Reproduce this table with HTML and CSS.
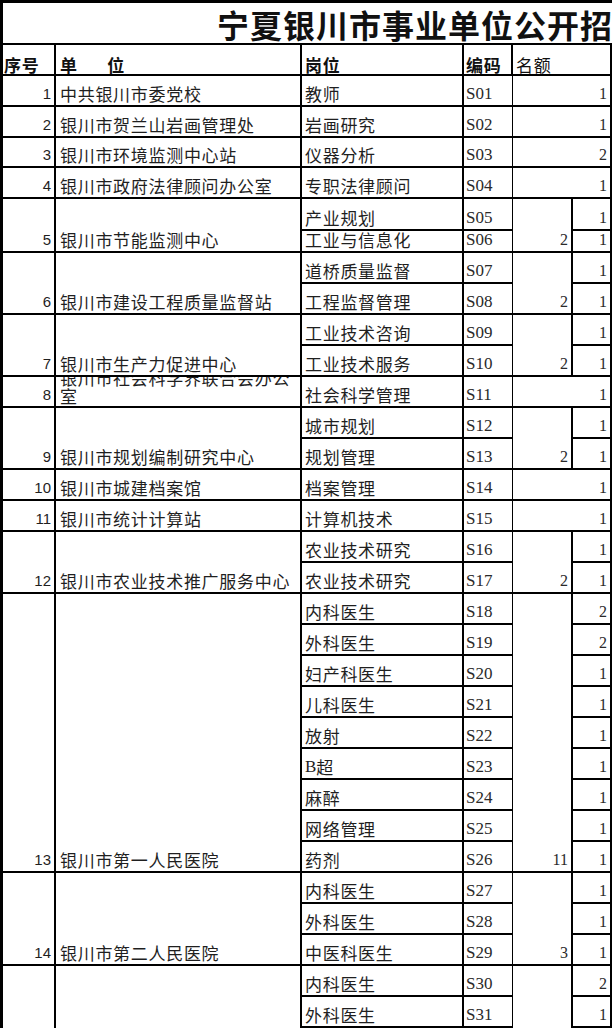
FILE: index.html
```html
<!DOCTYPE html>
<html lang="zh-CN">
<head>
<meta charset="utf-8">
<title>宁夏银川市事业单位公开招聘</title>
<link rel="stylesheet" href="styles.css">
</head>
<body>
<div class="sheet">
  <div class="cell title">宁夏银川市事业单位公开招</div>

  <div class="cell head">序号</div>
  <div class="cell head unit"><span class="spaced">单 位</span></div>
  <div class="cell head post">岗位</div>
  <div class="cell head code-h">编码</div>
  <div class="cell head quota-h span2c">名额</div>

  <div class="cell seq">1</div>
  <div class="cell unit">中共银川市委党校</div>
  <div class="cell post">教师</div>
  <div class="cell code">S01</div>
  <div class="cell cnt span2c">1</div>

  <div class="cell seq">2</div>
  <div class="cell unit">银川市贺兰山岩画管理处</div>
  <div class="cell post">岩画研究</div>
  <div class="cell code">S02</div>
  <div class="cell cnt span2c">1</div>

  <div class="cell seq">3</div>
  <div class="cell unit">银川市环境监测中心站</div>
  <div class="cell post">仪器分析</div>
  <div class="cell code">S03</div>
  <div class="cell cnt span2c">2</div>

  <div class="cell seq">4</div>
  <div class="cell unit">银川市政府法律顾问办公室</div>
  <div class="cell post">专职法律顾问</div>
  <div class="cell code">S04</div>
  <div class="cell cnt span2c">1</div>

  <div class="cell seq span2r">5</div>
  <div class="cell unit span2r">银川市节能监测中心</div>
  <div class="cell post">产业规划</div>
  <div class="cell code">S05</div>
  <div class="cell total span2r">2</div>
  <div class="cell cnt">1</div>
  <div class="cell post">工业与信息化</div>
  <div class="cell code">S06</div>
  <div class="cell cnt">1</div>

  <div class="cell seq span2r">6</div>
  <div class="cell unit span2r">银川市建设工程质量监督站</div>
  <div class="cell post">道桥质量监督</div>
  <div class="cell code">S07</div>
  <div class="cell total span2r">2</div>
  <div class="cell cnt">1</div>
  <div class="cell post">工程监督管理</div>
  <div class="cell code">S08</div>
  <div class="cell cnt">1</div>

  <div class="cell seq span2r">7</div>
  <div class="cell unit span2r">银川市生产力促进中心</div>
  <div class="cell post">工业技术咨询</div>
  <div class="cell code">S09</div>
  <div class="cell total span2r">2</div>
  <div class="cell cnt">1</div>
  <div class="cell post">工业技术服务</div>
  <div class="cell code">S10</div>
  <div class="cell cnt">1</div>

  <div class="cell seq">8</div>
  <div class="cell unit wrap"><span>银川市社会科学界联合会办公室</span></div>
  <div class="cell post">社会科学管理</div>
  <div class="cell code">S11</div>
  <div class="cell cnt span2c">1</div>

  <div class="cell seq span2r">9</div>
  <div class="cell unit span2r">银川市规划编制研究中心</div>
  <div class="cell post">城市规划</div>
  <div class="cell code">S12</div>
  <div class="cell total span2r">2</div>
  <div class="cell cnt">1</div>
  <div class="cell post">规划管理</div>
  <div class="cell code">S13</div>
  <div class="cell cnt">1</div>

  <div class="cell seq">10</div>
  <div class="cell unit">银川市城建档案馆</div>
  <div class="cell post">档案管理</div>
  <div class="cell code">S14</div>
  <div class="cell cnt span2c">1</div>

  <div class="cell seq">11</div>
  <div class="cell unit">银川市统计计算站</div>
  <div class="cell post">计算机技术</div>
  <div class="cell code">S15</div>
  <div class="cell cnt span2c">1</div>

  <div class="cell seq span2r">12</div>
  <div class="cell unit span2r">银川市农业技术推广服务中心</div>
  <div class="cell post">农业技术研究</div>
  <div class="cell code">S16</div>
  <div class="cell total span2r">2</div>
  <div class="cell cnt">1</div>
  <div class="cell post">农业技术研究</div>
  <div class="cell code">S17</div>
  <div class="cell cnt">1</div>

  <div class="cell seq span9r">13</div>
  <div class="cell unit span9r">银川市第一人民医院</div>
  <div class="cell post">内科医生</div>
  <div class="cell code">S18</div>
  <div class="cell total span9r">11</div>
  <div class="cell cnt">2</div>
  <div class="cell post">外科医生</div>
  <div class="cell code">S19</div>
  <div class="cell cnt">2</div>
  <div class="cell post">妇产科医生</div>
  <div class="cell code">S20</div>
  <div class="cell cnt">1</div>
  <div class="cell post">儿科医生</div>
  <div class="cell code">S21</div>
  <div class="cell cnt">1</div>
  <div class="cell post">放射</div>
  <div class="cell code">S22</div>
  <div class="cell cnt">1</div>
  <div class="cell post"><span class="latin">B</span>超</div>
  <div class="cell code">S23</div>
  <div class="cell cnt">1</div>
  <div class="cell post">麻醉</div>
  <div class="cell code">S24</div>
  <div class="cell cnt">1</div>
  <div class="cell post">网络管理</div>
  <div class="cell code">S25</div>
  <div class="cell cnt">1</div>
  <div class="cell post">药剂</div>
  <div class="cell code">S26</div>
  <div class="cell cnt">1</div>

  <div class="cell seq span3r">14</div>
  <div class="cell unit span3r">银川市第二人民医院</div>
  <div class="cell post">内科医生</div>
  <div class="cell code">S27</div>
  <div class="cell total span3r">3</div>
  <div class="cell cnt">1</div>
  <div class="cell post">外科医生</div>
  <div class="cell code">S28</div>
  <div class="cell cnt">1</div>
  <div class="cell post">中医科医生</div>
  <div class="cell code">S29</div>
  <div class="cell cnt">1</div>

  <div class="cell seq span2r open"></div>
  <div class="cell unit span2r open"></div>
  <div class="cell post">内科医生</div>
  <div class="cell code">S30</div>
  <div class="cell total span2r open"></div>
  <div class="cell cnt">2</div>
  <div class="cell post">外科医生</div>
  <div class="cell code">S31</div>
  <div class="cell cnt">1</div>
</div>
</body>
</html>
```

FILE: styles.css
```css
html, body {
  margin: 0;
  padding: 0;
  background: #fff;
}

body {
  width: 614px;
  height: 1028px;
  overflow: hidden;
  font-family: "Noto Sans CJK SC", "Liberation Sans", sans-serif;
  color: #1f1f1f;
}

.sheet {
  width: 612px;
  box-sizing: border-box;
  border-left: 3px solid #000;
  border-top: 3px solid #000;
  display: grid;
  grid-template-columns: 53px 246px 162px 49px 60px 39px;
  grid-template-rows: 42px 31px 31px 31px 30px 31px 32px 22px repeat(25, 31px);
}

.cell {
  box-sizing: border-box;
  border-right: 2px solid #000;
  border-bottom: 2px solid #000;
  display: flex;
  align-items: flex-end;
  overflow: hidden;
  white-space: nowrap;
  font-size: 17px;
  letter-spacing: 0.7px;
  line-height: 17px;
  padding: 0 0 3px 0;
}

.title {
  grid-column: span 6;
  border-right: none;
  font-size: 32px;
  line-height: 34px;
  letter-spacing: 1px;
  font-weight: 700;
  color: #111;
  padding: 0 0 2px 214px;
}

.head {
  font-weight: 700;
  color: #111;
  padding: 0 0 1px 1px;
}

.head.unit { padding-left: 4px; }
.head.post { padding-left: 3px; }
.head.code-h { padding-left: 2px; }
.head.quota-h {
  font-weight: 400;
  padding-left: 3px;
  border-right: 2px solid #000;
}

.spaced {
  white-space: pre;
  word-spacing: 25px;
}

.seq {
  justify-content: flex-end;
  font-family: "Liberation Sans", Arial, sans-serif;
  font-size: 15px;
  letter-spacing: 0;
  padding: 0 3px 3px 0;
}

.unit {
  padding-left: 4px;
}

.unit.wrap {
  white-space: normal;
  line-height: 18px;
  padding-bottom: 1px;
}

.post {
  padding-left: 3px;
}

.code {
  border-right-width: 1px;
  font-family: "Liberation Serif", "Times New Roman", serif;
  font-size: 17px;
  letter-spacing: 0;
  padding: 0 0 3px 2px;
  color: #2a2a2a;
}

.total,
.cnt {
  justify-content: flex-end;
  font-family: "Liberation Serif", "Times New Roman", serif;
  font-size: 16px;
  letter-spacing: 0;
  padding: 0 3px 3px 0;
  color: #2a2a2a;
}

.latin {
  font-family: "Liberation Serif", serif;
  letter-spacing: 0;
}

.span2c { grid-column: span 2; }
.span2r { grid-row: span 2; }
.span3r { grid-row: span 3; }
.span9r { grid-row: span 9; }

.open { border-bottom: none; }
```
